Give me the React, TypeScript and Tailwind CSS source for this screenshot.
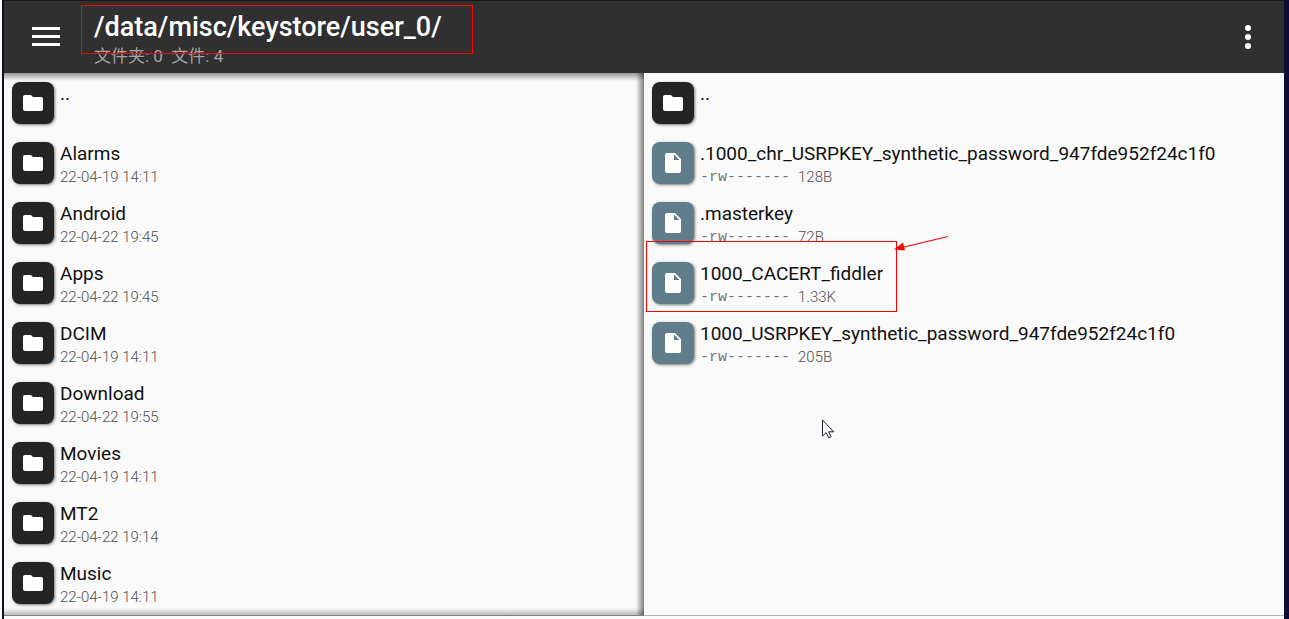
import type { ReactNode } from "react";

type Entry = {
  name: string;
  kind: "folder" | "file";
  date?: string;
  mode?: string;
  size?: string;
  marked?: boolean;
};

const leftEntries: Entry[] = [
  { name: "..", kind: "folder" },
  { name: "Alarms", kind: "folder", date: "22-04-19 14:11" },
  { name: "Android", kind: "folder", date: "22-04-22 19:45" },
  { name: "Apps", kind: "folder", date: "22-04-22 19:45" },
  { name: "DCIM", kind: "folder", date: "22-04-19 14:11" },
  { name: "Download", kind: "folder", date: "22-04-22 19:55" },
  { name: "Movies", kind: "folder", date: "22-04-19 14:11" },
  { name: "MT2", kind: "folder", date: "22-04-22 19:14" },
  { name: "Music", kind: "folder", date: "22-04-19 14:11" },
];

const rightEntries: Entry[] = [
  { name: "..", kind: "folder" },
  {
    name: ".1000_chr_USRPKEY_synthetic_password_947fde952f24c1f0",
    kind: "file",
    mode: "-rw-------",
    size: "128B",
  },
  { name: ".masterkey", kind: "file", mode: "-rw-------", size: "72B" },
  {
    name: "1000_CACERT_fiddler",
    kind: "file",
    mode: "-rw-------",
    size: "1.33K",
    marked: true,
  },
  {
    name: "1000_USRPKEY_synthetic_password_947fde952f24c1f0",
    kind: "file",
    mode: "-rw-------",
    size: "205B",
  },
];

const EntryIcon = ({ kind }: { kind: Entry["kind"] }) => (
  <span
    className={`flex size-[42px] shrink-0 items-center justify-center rounded-lg shadow-[1px_1px_3px_rgba(0,0,0,0.5)] ${
      kind === "folder" ? "bg-[#242424]" : "bg-[#607d8b]"
    }`}
  >
    <svg className="size-6" viewBox="0 0 24 24" fill="#fff" aria-hidden="true">
      {kind === "folder" ? (
        <path d="M10 4H4c-1.1 0-1.99.9-1.99 2L2 18c0 1.1.9 2 2 2h16c1.1 0 2-.9 2-2V8c0-1.1-.9-2-2-2h-8l-2-2z" />
      ) : (
        <path d="M6 2c-1.1 0-1.99.9-1.99 2L4 20c0 1.1.89 2 1.99 2H18c1.1 0 2-.9 2-2V8l-6-6H6zm7 7V3.5L18.5 9H13z" />
      )}
    </svg>
  </span>
);

/* red frame with an arrow pointing at its top right corner */
const Marker = () => (
  <>
    <span className="pointer-events-none absolute -top-3 left-0.5 z-10 h-[71px] w-[251px] border border-[#f00]" />
    <svg
      className="pointer-events-none absolute -top-5 left-[248px] z-10"
      width="60"
      height="20"
      viewBox="0 0 60 20"
      aria-hidden="true"
    >
      <path d="M56 3.5 10 14.5" stroke="#f00" strokeWidth="1.2" />
      <path d="M2 16.5 11 9.5 13 17.5z" fill="#f00" />
    </svg>
  </>
);

const EntryRow = ({ entry }: { entry: Entry }) => (
  <li className="relative">
    <button
      type="button"
      className="flex h-[60px] w-full items-start gap-1.5 px-2 pt-[9px] text-left"
    >
      <EntryIcon kind={entry.kind} />
      <span className="flex min-w-0 flex-col gap-px">
        <span className="truncate text-[19px] leading-6 text-[#111]">
          {entry.name}
        </span>
        <span className="flex h-5 items-center gap-2 text-[15px] leading-5 font-light text-[#505050]">
          {entry.date && <span>{entry.date}</span>}
          {entry.mode && (
            <span className="pt-0.5 font-['Liberation_Mono',monospace] text-[#757575]">
              {entry.mode}
            </span>
          )}
          {entry.size && <span>{entry.size}</span>}
        </span>
      </span>
    </button>
    {entry.marked && <Marker />}
  </li>
);

const Pane = ({
  entries,
  inactive,
  children,
}: {
  entries: Entry[];
  inactive?: boolean;
  children?: ReactNode;
}) => (
  <section className="relative min-w-0 flex-1">
    <ul>
      {entries.map((entry) => (
        <EntryRow key={entry.name} entry={entry} />
      ))}
    </ul>
    {inactive && (
      <>
        <div className="pointer-events-none absolute inset-x-0 top-0 h-2 bg-linear-to-b from-black/40 to-transparent" />
        <div className="pointer-events-none absolute inset-y-0 right-0 w-2 bg-linear-to-l from-black/50 to-transparent" />
        <div className="pointer-events-none absolute inset-x-0 -bottom-px h-2 bg-linear-to-t from-black/30 to-transparent" />
      </>
    )}
    {children}
  </section>
);

const Pointer = () => (
  <svg
    className="pointer-events-none absolute top-[346px] left-[178px]"
    width="13"
    height="21"
    viewBox="0 0 13 21"
    aria-hidden="true"
  >
    <path
      d="M.5 1v16l3.7-3.4 2.5 5.2 2.3-1-2.3-5h5z"
      fill="#fff"
      stroke="#1c1c2c"
      strokeWidth="1"
    />
  </svg>
);

const App = () => {
  return (
    <div className="flex min-h-screen bg-[#fafafa] pl-0.5 font-[Roboto,'Noto_Sans_CJK_SC',sans-serif]">
      <div className="flex min-w-0 flex-1 flex-col border-r-[5px] border-l-2 border-[#0b0d33]">
        <header className="flex h-[73px] items-center border-t border-[#181818] bg-[#303030] pr-6">
          <button
            type="button"
            aria-label="Menu"
            className="flex w-[90px] flex-col gap-[5px] pb-0.5 pl-7"
          >
            <span className="h-[3px] w-7 bg-white" />
            <span className="h-[3px] w-7 bg-white" />
            <span className="h-[3px] w-7 bg-white" />
          </button>
          <div className="relative flex-1 pt-[5px]">
            <h1 className="mb-0.5 text-[27px] leading-[30px] font-medium text-white">
              /data/misc/keystore/user_0/
            </h1>
            <p className="text-[17px] leading-6 whitespace-pre text-[#a4a4a4]">
              文件夹: 0{"  "}文件: 4
            </p>
            <span className="pointer-events-none absolute -top-[2px] -left-[13px] h-[49px] w-[392px] border border-[#f00]" />
          </div>
          <button
            type="button"
            aria-label="More options"
            className="flex w-6 flex-col items-center gap-[3px]"
          >
            <span className="size-1.5 rounded-full bg-white" />
            <span className="size-1.5 rounded-full bg-white" />
            <span className="size-1.5 rounded-full bg-white" />
          </button>
        </header>
        <main className="mb-[3px] flex flex-1 border-b border-[#b4b4b4]">
          <Pane entries={leftEntries} inactive />
          <Pane entries={rightEntries}>
            <Pointer />
          </Pane>
        </main>
      </div>
    </div>
  );
};

export default App;
